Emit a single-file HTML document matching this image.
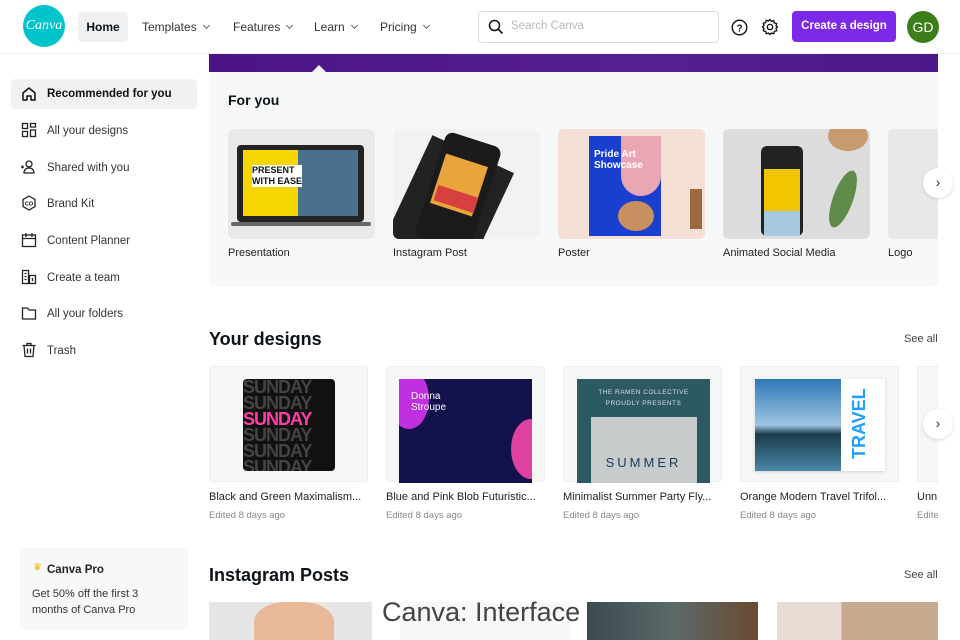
<!DOCTYPE html>
<html><head><meta charset="utf-8">
<style>
*{margin:0;padding:0;box-sizing:border-box}
body{width:960px;height:640px;overflow:hidden;background:#fff;font-family:"Liberation Sans",sans-serif;color:#0e1318;position:relative}
.a{position:absolute}
.nav{font-size:12px;color:#333;top:20px}
.nav i{display:inline-block;width:5px;height:5px;border-right:1px solid #666;border-bottom:1px solid #666;transform:rotate(45deg);margin-left:7px;position:relative;top:-3px}
.side{font-size:11.5px;color:#333;left:47px}
.ic{left:21px;width:16px;height:16px}
.card{border-radius:6px;overflow:hidden;width:147px;height:110px;top:129px}
.lbl{font-size:11px;color:#222;top:247px}
.dc{top:366px;width:159px;height:116px;background:#f5f6f6;border-radius:4px;border:1px solid #eceeee}
.t{font-size:11px;color:#222;top:491px}
.e{font-size:9.5px;color:#888;top:510px}
.arrow{width:30px;height:30px;border-radius:50%;background:#fff;box-shadow:0 1px 3px rgba(0,0,0,.15);font-size:14px;text-align:center;line-height:28px;color:#333}
</style></head><body>
<!-- header -->
<div class="a" style="left:23px;top:5px;width:42px;height:42px;border-radius:50%;background:#00c4cc;color:#fff;font-family:'Liberation Serif',serif;font-style:italic;font-size:14px;text-align:center;line-height:42px">Canva</div>
<div class="a" style="left:78px;top:12px;width:50px;height:30px;background:#f0f1f3;border-radius:4px;font-size:12px;font-weight:bold;text-align:center;line-height:30px">Home</div>
<div class="a nav" style="left:142px">Templates<i></i></div>
<div class="a nav" style="left:233px">Features<i></i></div>
<div class="a nav" style="left:314px">Learn<i></i></div>
<div class="a nav" style="left:380px">Pricing<i></i></div>
<div class="a" style="left:478px;top:11px;width:241px;height:32px;border:1px solid #d9dbdd;border-radius:4px"></div>
<svg class="a" style="left:488px;top:19px" width="16" height="16" viewBox="0 0 16 16"><circle cx="6.5" cy="6.5" r="5" fill="none" stroke="#111" stroke-width="1.5"/><path d="M10 10l4.5 4.5" stroke="#111" stroke-width="1.6"/></svg>
<div class="a" style="left:511px;top:20px;font-size:11.5px;color:#b5b8bb">Search Canva</div>
<svg class="a" style="left:731px;top:19px" width="17" height="17" viewBox="0 0 17 17"><circle cx="8.5" cy="8.5" r="7.3" fill="none" stroke="#111" stroke-width="1.4"/><text x="8.5" y="12.3" font-size="10" text-anchor="middle" font-family="Liberation Sans" font-weight="bold" fill="#111">?</text></svg>
<svg class="a" style="left:761px;top:18px" width="18" height="18" viewBox="0 0 24 24"><path d="M12 2l2 2.5 3-1 .8 3.2 3.2.8-1 3L22 12l-2 2 1 3-3.2.8-.8 3.2-3-1L12 22l-2-2-3 1-.8-3.2L3 17l1-3-2-2 2-2-1-3 3.2-.8L7 3l3 1z" fill="none" stroke="#111" stroke-width="1.8" stroke-linejoin="round"/><circle cx="12" cy="12" r="3.5" fill="none" stroke="#111" stroke-width="1.8"/></svg>
<div class="a" style="left:792px;top:11px;width:104px;height:31px;background:#7d2ae8;border-radius:4px;color:#fff;font-size:11.5px;font-weight:bold;text-align:center;line-height:31px">Create a design</div>
<div class="a" style="left:907px;top:11px;width:32px;height:32px;border-radius:50%;background:#3d7e1c;color:#fff;font-size:14px;text-align:center;line-height:32px">GD</div>
<div class="a" style="left:0;top:53px;width:960px;height:1px;background:#eef0f1"></div>
<!-- sidebar -->
<div class="a" style="left:11px;top:79px;width:186px;height:30px;background:#f0f1f3;border-radius:4px"></div>
<svg class="a ic" style="top:86px" viewBox="0 0 16 16"><path d="M2 14V7l6-5 6 5v7h-4v-4H6v4z" fill="none" stroke="#111" stroke-width="1.5" stroke-linejoin="round"/></svg>
<div class="a side" style="top:88px;font-weight:bold;color:#111">Recommended for you</div>
<svg class="a ic" style="top:122px" viewBox="0 0 16 16"><g fill="none" stroke="#222" stroke-width="1.3"><rect x="1.5" y="1.5" width="5" height="5"/><rect x="9.5" y="1.5" width="5" height="3.5"/><rect x="1.5" y="9.5" width="5" height="5"/><rect x="9.5" y="8" width="5" height="6.5"/></g></svg>
<div class="a side" style="top:125px">All your designs</div>
<svg class="a ic" style="top:159px" viewBox="0 0 16 16"><g fill="none" stroke="#222" stroke-width="1.3"><circle cx="8" cy="5" r="3"/><path d="M3 14c0-3 2-5 5-5s5 2 5 5z"/><path d="M0 8h3M1.5 6.5v3"/></g></svg>
<div class="a side" style="top:162px">Shared with you</div>
<svg class="a ic" style="top:195px" viewBox="0 0 16 16"><path d="M8 1l6 3.5v7L8 15l-6-3.5v-7z" fill="none" stroke="#222" stroke-width="1.3"/><text x="8" y="10.5" font-size="5.5" text-anchor="middle" font-family="Liberation Sans" font-weight="bold">CO</text></svg>
<div class="a side" style="top:198px">Brand Kit</div>
<svg class="a ic" style="top:232px" viewBox="0 0 16 16"><g fill="none" stroke="#222" stroke-width="1.3"><rect x="1.5" y="3" width="13" height="11.5"/><path d="M1.5 6.5h13M5 1v4M11 1v4"/></g></svg>
<div class="a side" style="top:235px">Content Planner</div>
<svg class="a ic" style="top:269px" viewBox="0 0 16 16"><g fill="none" stroke="#222" stroke-width="1.3"><rect x="1.5" y="1.5" width="6" height="13"/><rect x="8.5" y="6.5" width="6" height="8"/><path d="M3.5 4.5h2M3.5 7.5h2M3.5 10.5h2M11.5 9v3"/></g></svg>
<div class="a side" style="top:272px">Create a team</div>
<svg class="a ic" style="top:305px" viewBox="0 0 16 16"><path d="M1.5 3h5l1.5 2h6.5v9h-13z" fill="none" stroke="#222" stroke-width="1.3"/></svg>
<div class="a side" style="top:308px">All your folders</div>
<svg class="a ic" style="top:342px" viewBox="0 0 16 16"><g fill="none" stroke="#222" stroke-width="1.3"><path d="M1.5 3.5h13M6 3.5V1.5h4v2M3 3.5l1 11h8l1-11M6.5 6.5v5M9.5 6.5v5"/></g></svg>
<div class="a side" style="top:345px">Trash</div>
<div class="a" style="left:20px;top:548px;width:168px;height:82px;background:#f7f8f8;border-radius:4px"></div>
<div class="a" style="left:33px;top:562px;font-size:10px;color:#f5b800">♛</div>
<div class="a" style="left:47px;top:564px;font-size:11.5px;font-weight:bold;color:#222">Canva Pro</div>
<div class="a" style="left:32px;top:586px;font-size:11px;color:#333;line-height:16px">Get 50% off the first 3<br>months of Canva Pro</div>
<!-- banner -->
<div class="a" style="left:209px;top:54px;width:729px;height:18px;background:linear-gradient(90deg,#4a1486,#55208f 60%,#4c1789)"></div>
<div class="a" style="left:311px;top:65px;width:0;height:0;border-left:8px solid transparent;border-right:8px solid transparent;border-bottom:8px solid #f7f8f8"></div>
<div class="a" style="left:209px;top:72px;width:729px;height:215px;background:#f7f8f8;border-radius:0 0 6px 6px"></div>
<div class="a" style="left:228px;top:92px;font-size:14px;font-weight:bold">For you</div>
<div class="a card" style="left:228px;background:#e9e9e9">
 <div class="a" style="left:9px;top:16px;width:127px;height:77px;background:#222;border-radius:4px"></div>
 <div class="a" style="left:15px;top:21px;width:115px;height:66px;background:#f6d500"></div>
 <div class="a" style="left:70px;top:21px;width:60px;height:66px;background:#4a7090"></div>
 <div class="a" style="left:24px;top:36px;font-size:9px;font-weight:bold;line-height:11px;background:#fff;color:#111">PRESENT<br>WITH EASE</div>
 <div class="a" style="left:3px;top:93px;width:140px;height:4px;background:#666;border-radius:2px"></div>
</div>
<div class="lbl a" style="left:228px">Presentation</div>
<div class="a card" style="left:393px;background:#f2f2f2">
 <div class="a" style="left:12px;top:20px;width:90px;height:110px;background:#222;transform:rotate(25deg)"></div>
 <div class="a" style="left:36px;top:8px;width:58px;height:110px;background:#1b1b1b;border-radius:8px;transform:rotate(18deg)"></div>
 <div class="a" style="left:44px;top:30px;width:44px;height:52px;background:#e8a53c;transform:rotate(18deg)"></div>
 <div class="a" style="left:42px;top:62px;width:42px;height:16px;background:#d64040;transform:rotate(18deg)"></div>
</div>
<div class="lbl a" style="left:393px">Instagram Post</div>
<div class="a card" style="left:558px;background:#f4e0d4">
 <div class="a" style="left:31px;top:7px;width:72px;height:100px;background:#1a3fcf"></div>
 <div class="a" style="left:63px;top:7px;width:40px;height:60px;background:#e9a6b4;border-radius:0 0 20px 20px"></div>
 <div class="a" style="left:36px;top:20px;font-size:10px;font-weight:bold;color:#fff;line-height:11px">Pride Art<br>Showcase</div>
 <div class="a" style="left:60px;top:72px;width:36px;height:30px;background:#c89060;border-radius:50%"></div>
 <div class="a" style="left:132px;top:60px;width:12px;height:40px;background:#9a6a40"></div>
</div>
<div class="lbl a" style="left:558px">Poster</div>
<div class="a card" style="left:723px;background:#dcdcdc">
 <div class="a" style="left:38px;top:17px;width:42px;height:90px;background:#222;border-radius:6px"></div>
 <div class="a" style="left:41px;top:40px;width:36px;height:42px;background:#f2c500"></div>
 <div class="a" style="left:41px;top:82px;width:36px;height:25px;background:#a8c8e0"></div>
 <div class="a" style="left:105px;top:-8px;width:40px;height:30px;background:#c89a70;border-radius:50%"></div>
 <div class="a" style="left:110px;top:40px;width:20px;height:60px;background:#5f8a4a;border-radius:50%;transform:rotate(20deg)"></div>
</div>
<div class="lbl a" style="left:723px">Animated Social Media</div>
<div class="a card" style="left:888px;width:50px;background:#e8e8e8;border-radius:6px 0 0 6px"></div>
<div class="lbl a" style="left:888px">Logo</div>
<!-- your designs -->
<div class="a" style="left:209px;top:329px;font-size:18px;font-weight:bold">Your designs</div>
<div class="a" style="left:904px;top:333px;font-size:11px;color:#444">See all</div>
<div class="a dc" style="left:209px"><div class="a" style="left:33px;top:12px;width:92px;height:92px;background:#111;border-radius:4px;overflow:hidden;color:#444;font-size:18px;font-weight:bold;line-height:16px;letter-spacing:-1px;white-space:nowrap">SUNDAY<br>SUNDAY<br><span style="color:#ff3ea5">SUNDAY</span><br>SUNDAY<br>SUNDAY<br>SUNDAY</div></div>
<div class="a dc" style="left:386px"><div class="a" style="left:12px;top:12px;width:133px;height:104px;background:#14124d;overflow:hidden"><div class="a" style="left:-10px;top:-10px;width:40px;height:60px;background:#c030e0;border-radius:50%"></div><div class="a" style="left:112px;top:40px;width:40px;height:60px;background:#e040a0;border-radius:50%"></div><div class="a" style="left:12px;top:12px;color:#fff;font-size:10px;line-height:11px">Donna<br>Stroupe</div></div></div>
<div class="a dc" style="left:563px"><div class="a" style="left:13px;top:12px;width:133px;height:104px;background:#2c5a62;overflow:hidden"><div class="a" style="left:0;top:8px;width:133px;text-align:center;color:#dde;font-size:6.5px;line-height:11px;letter-spacing:.5px">THE RAMEN COLLECTIVE<br>PROUDLY PRESENTS</div><div class="a" style="left:14px;top:38px;width:106px;height:70px;background:#c7cbcb"></div><div class="a" style="left:0;top:76px;width:133px;text-align:center;color:#1c3a5a;font-size:13px;letter-spacing:3px">SUMMER</div></div></div>
<div class="a dc" style="left:740px"><div class="a" style="left:14px;top:12px;width:130px;height:92px;background:#fff;overflow:hidden;box-shadow:0 1px 3px rgba(0,0,0,.15)"><div class="a" style="left:0;top:0;width:86px;height:92px;background:linear-gradient(#2e78b8,#9ec4e0 50%,#1a3c4a 60%,#4a86a8)"></div><div class="a" style="left:94px;font-size:18px;font-weight:bold;color:#1ea0ff;transform:rotate(-90deg);transform-origin:left top;top:80px">TRAVEL</div></div></div>
<div class="a dc" style="left:917px;width:30px"></div>
<div class="a t" style="left:209px">Black and Green Maximalism...</div>
<div class="a t" style="left:386px">Blue and Pink Blob Futuristic...</div>
<div class="a t" style="left:563px">Minimalist Summer Party Fly...</div>
<div class="a t" style="left:740px">Orange Modern Travel Trifol...</div>
<div class="a t" style="left:917px">Unn</div>
<div class="a e" style="left:209px">Edited 8 days ago</div>
<div class="a e" style="left:386px">Edited 8 days ago</div>
<div class="a e" style="left:563px">Edited 8 days ago</div>
<div class="a e" style="left:740px">Edited 8 days ago</div>
<div class="a e" style="left:917px">Edite</div>
<div class="a" style="left:938px;top:54px;width:22px;height:586px;background:#fff"></div>
<div class="a arrow" style="left:923px;top:168px">›</div>
<div class="a arrow" style="left:923px;top:409px">›</div>
<!-- instagram posts -->
<div class="a" style="left:209px;top:565px;font-size:18px;font-weight:bold">Instagram Posts</div>
<div class="a" style="left:904px;top:569px;font-size:11px;color:#444">See all</div>
<div class="a" style="left:209px;top:602px;width:163px;height:38px;background:#e6e6e6;overflow:hidden"><div class="a" style="left:45px;top:0;width:80px;height:50px;background:#e8b898;border-radius:40% 40% 0 0"></div></div>
<div class="a" style="left:400px;top:602px;width:170px;height:38px;background:#f8f8f8"></div>
<div class="a" style="left:587px;top:602px;width:171px;height:38px;background:linear-gradient(90deg,#3a4a4e,#5a6a6a 50%,#6a4a30)"></div>
<div class="a" style="left:777px;top:602px;width:161px;height:38px;background:linear-gradient(90deg,#e8dcd4 40%,#c8aa90 40%)"></div>
<div class="a" style="left:382px;top:597px;font-size:27px;color:#444">Canva: Interface</div>
</body></html>
